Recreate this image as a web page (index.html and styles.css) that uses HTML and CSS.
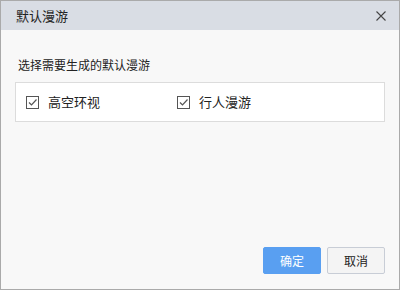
FILE: index.html
```html
<!DOCTYPE html>
<html lang="zh">
<head>
<meta charset="utf-8">
<link rel="stylesheet" href="styles.css">
</head>
<body>
<div class="dialog">
  <div class="header">
    <span class="title">默认漫游</span>
    <svg class="close" width="10" height="10" viewBox="0 0 10 10"><path d="M0.5 0.5 L9.5 9.5 M9.5 0.5 L0.5 9.5" stroke="#444" stroke-width="1.1" fill="none"/></svg>
  </div>
  <div class="body">
    <div class="label">选择需要生成的默认漫游</div>
    <div class="options">
      <label class="option">
        <span class="check"><svg width="11" height="11" viewBox="0 0 11 11"><path d="M2 5.5 L4.5 8 L9.5 2.5" stroke="#555" stroke-width="1.2" fill="none"/></svg></span>
        <span class="opt-text">高空环视</span>
      </label>
      <label class="option">
        <span class="check"><svg width="11" height="11" viewBox="0 0 11 11"><path d="M2 5.5 L4.5 8 L9.5 2.5" stroke="#555" stroke-width="1.2" fill="none"/></svg></span>
        <span class="opt-text">行人漫游</span>
      </label>
    </div>
  </div>
  <div class="footer">
    <button class="btn btn-primary">确定</button>
    <button class="btn btn-default">取消</button>
  </div>
</div>
</body>
</html>
```

FILE: styles.css
```css
html, body {
  margin: 0;
  padding: 0;
}
body {
  font-family: "Noto Sans CJK SC", "Liberation Sans", sans-serif;
  color: #222;
}
.dialog {
  box-sizing: border-box;
  width: 400px;
  height: 290px;
  border: 1px solid #aaaaaa;
  background: #f8f8f8;
  display: flex;
  flex-direction: column;
}
.header {
  height: 29px;
  background: #d9dde4;
  display: flex;
  align-items: center;
  justify-content: space-between;
  padding: 0 13px 0 15px;
}
.title {
  font-size: 13px;
  line-height: 16px;
  color: #222;
}
.close {
  display: block;
}
.body {
  padding: 27px 14px 0 14px;
}
.label {
  font-size: 12px;
  line-height: 16px;
  padding-left: 3px;
  color: #222;
}
.options {
  margin-top: 9px;
  height: 40px;
  box-sizing: border-box;
  border: 1px solid #dcdcdc;
  background: #ffffff;
  display: flex;
  align-items: center;
  padding-left: 10px;
}
.option {
  width: 151px;
  display: flex;
  align-items: center;
  gap: 9px;
}
.check {
  box-sizing: border-box;
  width: 13px;
  height: 13px;
  border: 1px solid #555;
  background: #fff;
  display: flex;
  align-items: center;
  justify-content: center;
}
.check svg {
  display: block;
}
.opt-text {
  font-size: 13px;
  line-height: 16px;
  color: #222;
}
.footer {
  margin-top: auto;
  display: flex;
  justify-content: flex-end;
  gap: 6px;
  padding: 0 14px 15px 0;
}
.btn {
  box-sizing: border-box;
  width: 58px;
  height: 27px;
  font-family: "Noto Sans CJK SC", "Liberation Sans", sans-serif;
  font-size: 12px;
  border-radius: 2px;
  padding: 0;
  cursor: pointer;
}
.btn-primary {
  background: #599ff1;
  border: 1px solid #599ff1;
  color: #fff;
}
.btn-default {
  background: #f4f4f4;
  border: 1px solid #c8cdd6;
  color: #222;
}
```
